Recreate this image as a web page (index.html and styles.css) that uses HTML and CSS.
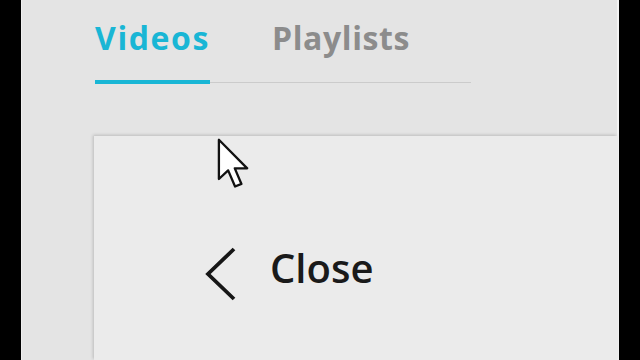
FILE: index.html
```html
<!DOCTYPE html>
<html lang="en">
<head>
    <meta charset="UTF-8">
    <meta name="viewport" content="width=device-width, initial-scale=1.0">
    <title>Videos</title>
    <link rel="stylesheet" href="styles.css">
</head>
<body>
    <div class="app">
        <div class="header">
            <div class="tabs">
                <div class="tab active">Videos</div>
                <div class="tab">Playlists</div>
            </div>
        </div>
        <div class="panel">
            <div class="close-row">
                <svg class="chevron" width="34" height="56" viewBox="0 0 34 56">
                    <path d="M30 3 L4 28 L30 53" fill="none" stroke="#161616" stroke-width="3.8"/>
                </svg>
                <span class="close-label">Close</span>
            </div>
        </div>
        <svg class="cursor" width="35" height="52" viewBox="0 0 12 18">
            <path d="M0.6 0.6 L0.6 14.2 L3.8 11.2 L6.2 16.8 L8.4 15.9 L6.1 10.5 L10.4 10.5 Z" fill="#fff" stroke="#111" stroke-width="0.8" stroke-linejoin="round"/>
        </svg>
    </div>
</body>
</html>
```

FILE: styles.css
```css
body {
    margin: 0;
    background-color: #000;
    font-family: 'Open Sans', 'Liberation Sans', sans-serif;
    overflow: hidden;
}
.app {
    position: relative;
    height: 360px;
    margin: 0 21px 0 21px;
    background-color: #e4e4e4;
    border-left: 1px solid #efefef;
    border-right: 2px solid #f2f2f2;
    display: flex;
    flex-direction: column;
}
.header {
    padding: 18px 0 0 73px;
    height: 118px;
}
.tabs {
    display: flex;
    width: 376px;
    gap: 62px;
    border-bottom: 1px solid #cbcbcb;
}
.tab {
    font-size: 32px;
    font-weight: 700;
    line-height: 40px;
    letter-spacing: 0.6px;
    color: #8c8c8c;
    padding-bottom: 24px;
}
.tab.active {
    color: #19b6d5;
    letter-spacing: 1.6px;
    border-bottom: 4px solid #19b6d5;
    margin-bottom: -2px;
    padding-bottom: 21px;
}
.panel {
    flex: 1;
    margin-left: 72px;
    background-color: #ebebeb;
    box-shadow: -1px -1px 3px rgba(0, 0, 0, 0.18);
}
.close-row {
    display: flex;
    align-items: flex-start;
    gap: 32px;
    padding: 110px 0 0 110px;
}
.chevron {
    display: block;
}
.close-label {
    font-size: 40px;
    font-weight: 600;
    color: #1a1a1a;
    line-height: 44px;
}
.cursor {
    position: absolute;
    left: 195px;
    top: 138px;
}
```
